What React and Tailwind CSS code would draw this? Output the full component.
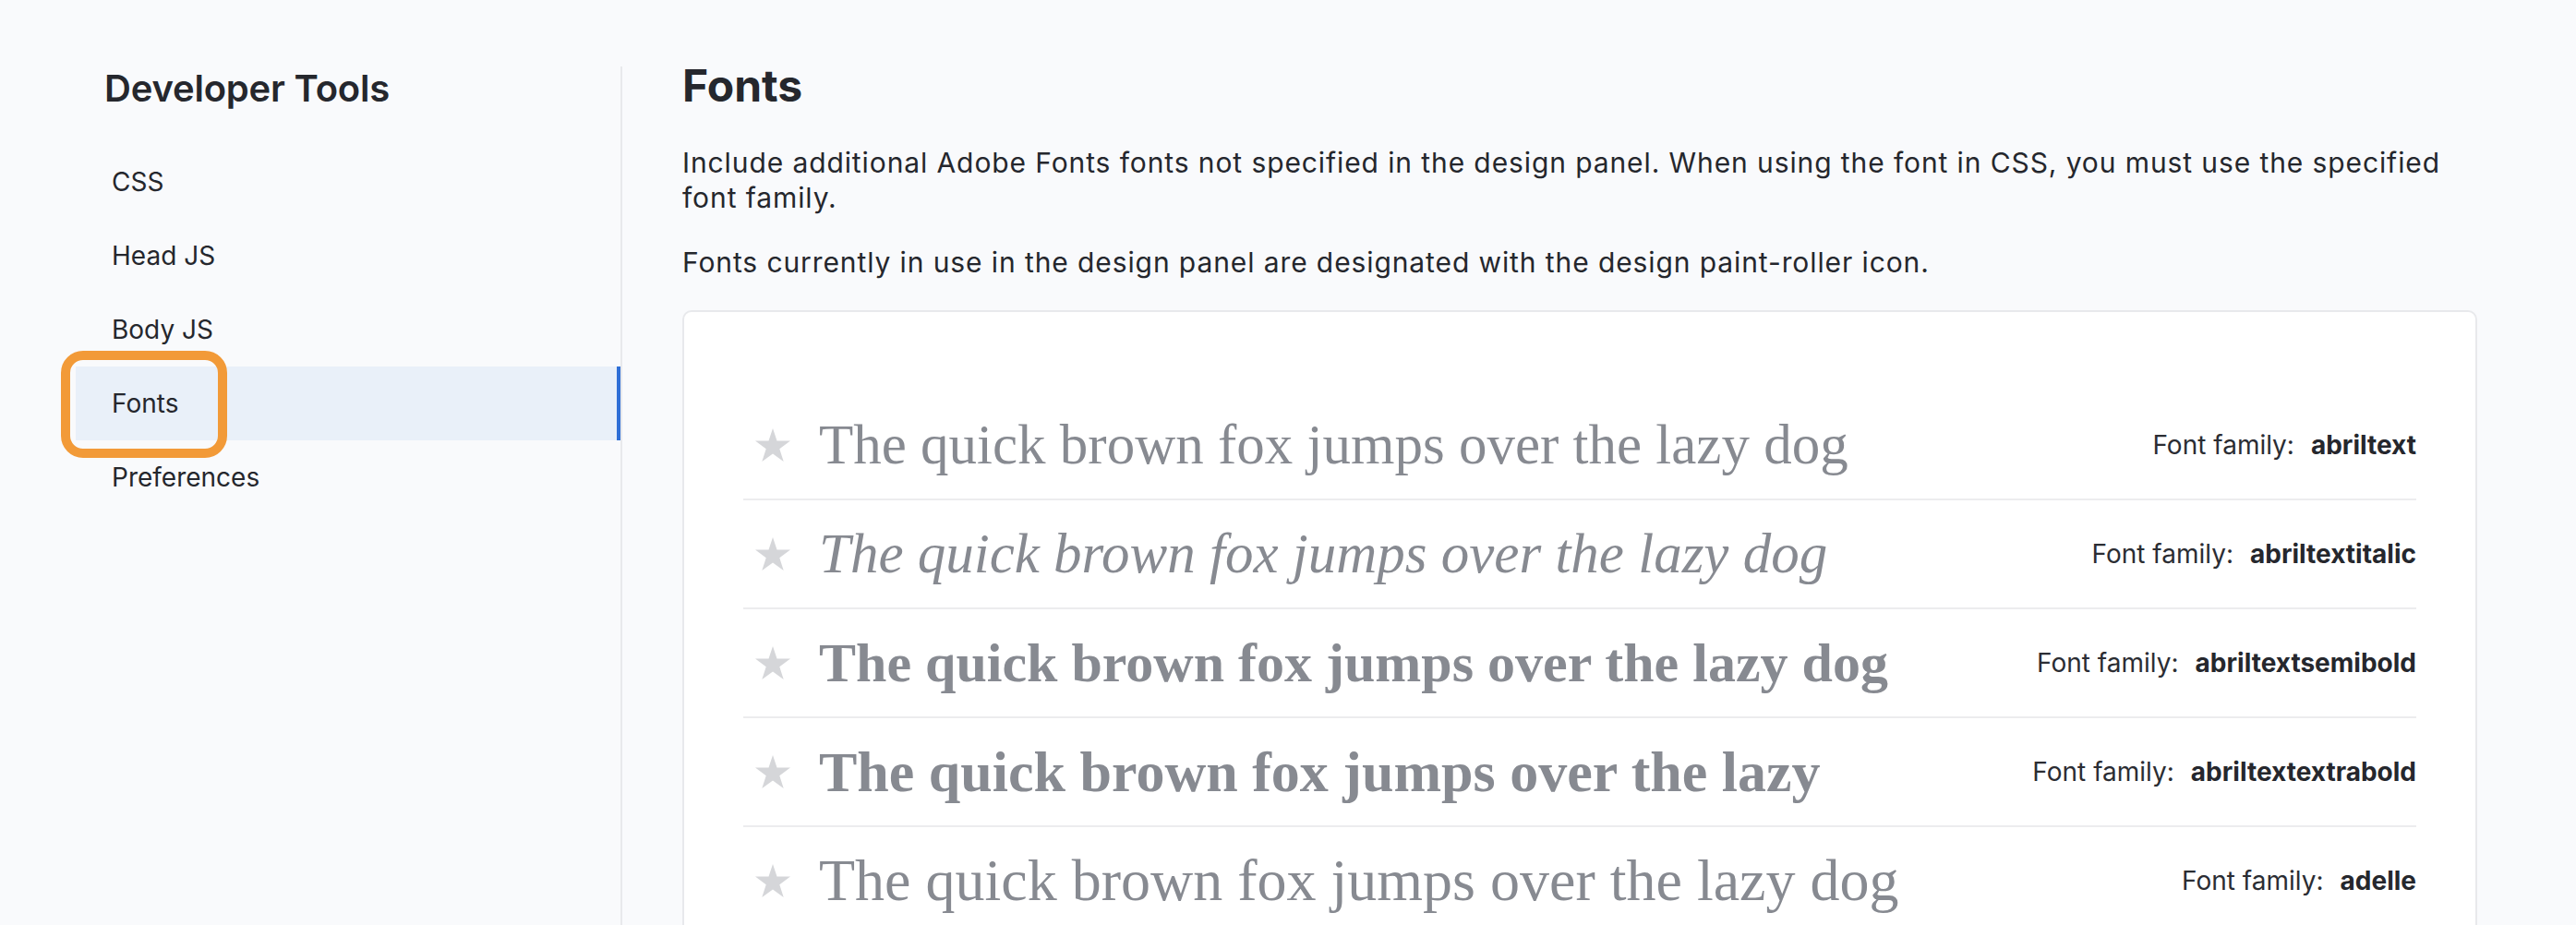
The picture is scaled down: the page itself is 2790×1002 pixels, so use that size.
import React from "react";

const navItems = ["CSS", "Head JS", "Body JS", "Fonts", "Preferences"];

const fontRows = [
  { sample: "The quick brown fox jumps over the lazy dog", family: "abriltext", cls: "text-[61px] font-normal" },
  { sample: "The quick brown fox jumps over the lazy dog", family: "abriltextitalic", cls: "text-[61px] font-normal italic" },
  { sample: "The quick brown fox jumps over the lazy dog", family: "abriltextsemibold", cls: "text-[60px] font-bold" },
  { sample: "The quick brown fox jumps over the lazy", family: "abriltextextrabold", cls: "text-[62px] font-black" },
  { sample: "The quick brown fox jumps over the lazy dog", family: "adelle", cls: "text-[64px] font-normal" },
];

const Star = () => (
  <svg width="38" height="37" viewBox="0 0 38 37" className="shrink-0">
    <polygon
      points="19,0 23.5,13.6 38,13.6 26.3,22.2 30.7,36 19,27.5 7.3,36 11.7,22.2 0,13.6 14.5,13.6"
      fill="#d5d6d9"
    />
  </svg>
);

const App = () => {
  return (
    <div className="relative flex h-[1002px] w-full overflow-hidden bg-[#f9fafc] font-['Inter',sans-serif] text-[#25272d]">
      {/* Sidebar */}
      <aside className="w-[674px] shrink-0 pt-[66px]">
        <div className="h-full border-r-2 border-[#e8e9ec]">
          <h2 className="mt-[6px] pl-[113px] text-[40px] leading-[48px] font-semibold tracking-[-0.2px]">
            Developer Tools
          </h2>
          <nav className="mt-[37px] ml-[82px]">
            {navItems.map((item) => (
              <div
                key={item}
                className={
                  item === "Fonts"
                    ? "flex h-[80px] items-center pl-[39px] text-[28px] bg-[#e9f0f9] border-r-4 border-[#2f6fd6]"
                    : "flex h-[80px] items-center pl-[39px] text-[28px]"
                }
              >
                {item}
              </div>
            ))}
          </nav>
        </div>
      </aside>

      {/* Main Content */}
      <main className="flex-1 pl-[65px] pr-[107px] pt-[65px]">
        <h1 className="text-[48px] leading-[56px] font-bold">Fonts</h1>
        <p className="mt-[36px] text-[30px] leading-[38px] tracking-[0.9px]">
          Include additional Adobe Fonts fonts not specified in the design panel. When using the font in CSS, you must use the specified font family.
        </p>
        <p className="mt-[32px] text-[30px] leading-[38px] tracking-[0.9px]">
          Fonts currently in use in the design panel are designated with the design paint-roller icon.
        </p>

        <div className="mt-[33px] rounded-[10px] border-2 border-[#e8e9ec] bg-white px-[64px] pt-[86px]">
          {fontRows.map((row) => (
            <div
              key={row.family}
              className="flex h-[118px] items-center border-b-2 border-[#ececee] pl-[13px]"
            >
              <Star />
              <span
                className={`ml-[31px] flex-1 whitespace-nowrap font-['Liberation_Serif',serif] text-[#878a91] ${row.cls}`}
              >
                {row.sample}
              </span>
              <span className="flex items-baseline gap-[18px] text-[28px]">
                <span className="text-[#2b2d33]">Font family:</span>
                <span className="font-bold">{row.family}</span>
              </span>
            </div>
          ))}
        </div>
      </main>

      {/* orange highlight annotation */}
      <div className="pointer-events-none absolute left-[66px] top-[380px] h-[116px] w-[180px] rounded-[24px] border-[10px] border-[#f29a38]" />
    </div>
  );
};

export default App;
